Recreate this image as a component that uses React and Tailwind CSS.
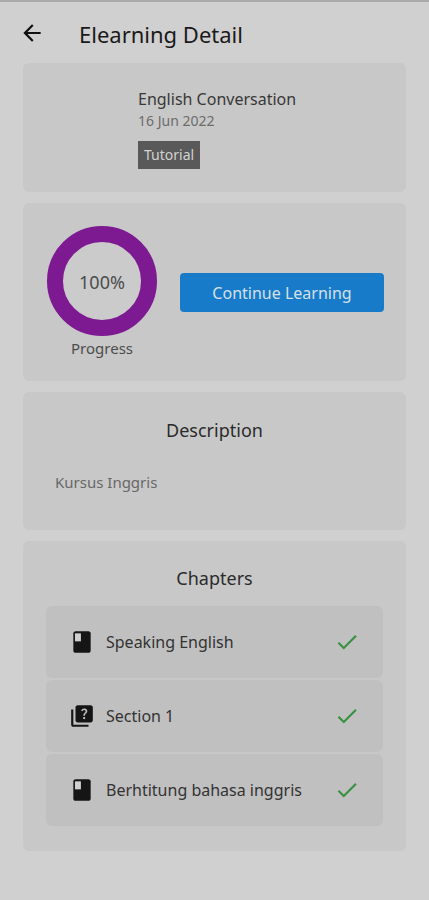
import { MdArrowBack, MdCheck, MdQuiz } from "react-icons/md";

const chapters = [
  { title: "Speaking English", type: "lesson" },
  { title: "Section 1", type: "quiz" },
  { title: "Berhtitung bahasa inggris", type: "lesson" },
];

function BookIcon() {
  return (
    <svg viewBox="0 0 24 24" className="size-[26px]" fill="currentColor" aria-hidden="true">
      <path d="M18 2H6c-1.1 0-2 .9-2 2v16c0 1.1.9 2 2 2h12c1.1 0 2-.9 2-2V4c0-1.1-.9-2-2-2z" />
      <path d="M5.5 4H11v7.4H5.5z" fill="#d0d0d0" />
    </svg>
  );
}

function Card({ className, children }) {
  return <section className={`rounded-md bg-[#c8c8c8] ${className}`}>{children}</section>;
}

function ProgressRing({ value }) {
  const circumference = 2 * Math.PI * 47;

  return (
    <div className="grid size-[110px] place-items-center">
      <svg viewBox="0 0 110 110" className="col-start-1 row-start-1 size-full" aria-hidden="true">
        <circle cx="55" cy="55" r="40" fill="#cbcbcb" />
        <circle
          cx="55"
          cy="55"
          r="47"
          fill="none"
          stroke="#7d1a92"
          strokeWidth="16"
          strokeDasharray={`${(circumference * value) / 100} ${circumference}`}
          transform="rotate(-90 55 55)"
        />
      </svg>
      <span className="z-10 col-start-1 row-start-1 pt-[2px] text-lg text-[#4c4c4c]">{value}%</span>
    </div>
  );
}

function ChapterRow({ title, type }) {
  return (
    <li>
      <button type="button" className="flex h-[72px] w-full items-center rounded-md bg-[#c0c0c0] px-[23px] text-left text-[#151515]">
        {type === "quiz" ? <MdQuiz size={26} /> : <BookIcon />}
        <span className="ml-[11px] flex-1 text-base text-[#333333]">{title}</span>
        <MdCheck size={26} className="text-[#3b9141]" />
      </button>
    </li>
  );
}

export default function App() {
  return (
    <div className="min-h-screen border-t-2 border-[#aaaaaa] bg-[#d0d0d0] px-[23px] font-['Noto_Sans','Open_Sans',sans-serif]">
      <header className="-ml-1 flex h-[61px] items-center">
        <button type="button" aria-label="Back" className="text-[#111111]">
          <MdArrowBack size={26} />
        </button>
        <h1 className="ml-[34px] pt-[2px] text-[22px] leading-8 text-[#1a1a1a]">Elearning Detail</h1>
      </header>

      <main className="flex flex-col gap-[11px] pb-12">
        <Card className="flex h-[129px] flex-col items-start pt-6 pl-[115px]">
          <h2 className="text-base leading-6 text-[#383838]">English Conversation</h2>
          <p className="text-sm leading-5 text-[#6c6c6c]">16 Jun 2022</p>
          <span className="mt-[10px] bg-[#595959] px-[6px] text-sm leading-7 text-[#d2d2d2]">Tutorial</span>
        </Card>

        <Card className="flex h-[178px] items-center gap-[23px] pr-[22px] pl-6">
          <div className="flex flex-col items-center pt-[2px] text-[#4c4c4c]">
            <ProgressRing value={100} />
            <p className="text-[15px] leading-6">Progress</p>
          </div>
          <button type="button" className="h-[39px] flex-1 rounded bg-[#187bc9] pt-[2px] text-base text-[#d5e0e9]">
            Continue Learning
          </button>
        </Card>

        <Card className="h-[138px] px-8 pt-6">
          <h2 className="text-center text-lg leading-7 text-[#2b2b2b]">Description</h2>
          <p className="mt-6 text-[15px] leading-7 text-[#686868]">Kursus Inggris</p>
        </Card>

        <Card className="px-[23px] pt-[23px] pb-[25px]">
          <h2 className="text-center text-lg leading-7 text-[#2b2b2b]">Chapters</h2>
          <ul className="mt-[14px] flex flex-col gap-[2px]">
            {chapters.map((chapter) => (
              <ChapterRow key={chapter.title} {...chapter} />
            ))}
          </ul>
        </Card>
      </main>
    </div>
  );
}
